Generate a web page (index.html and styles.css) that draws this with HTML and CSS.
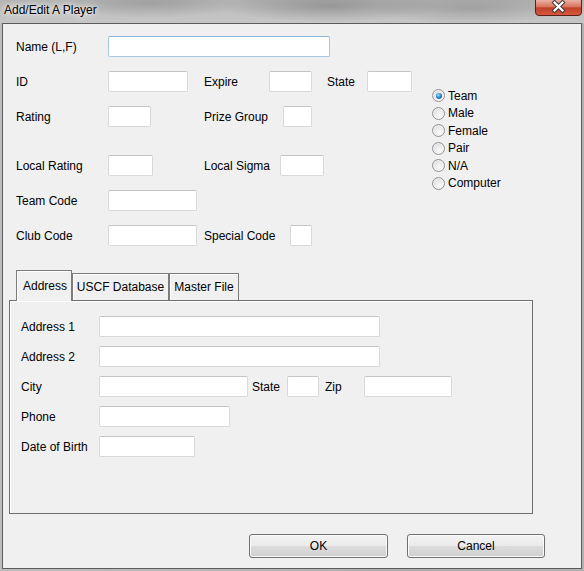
FILE: index.html
```html
<!DOCTYPE html>
<html>
<head>
<meta charset="utf-8">
<link rel="stylesheet" href="styles.css">
</head>
<body>
<div class="window">
  <div class="titlebar">
    <span class="title">Add/Edit A Player</span>
    <div class="close">
      <svg width="47" height="16" viewBox="0 0 47 16">
        <defs>
          <linearGradient id="cg" x1="0" y1="0" x2="0" y2="1">
            <stop offset="0" stop-color="#eab0a2"/>
            <stop offset="0.45" stop-color="#d8735c"/>
            <stop offset="0.5" stop-color="#c2402a"/>
            <stop offset="1" stop-color="#d65c3e"/>
          </linearGradient>
        </defs>
        <path d="M0.5 0 V12 Q0.5 15.5 4 15.5 H43 Q46.5 15.5 46.5 12 V0" fill="url(#cg)" stroke="#5b2119"/>
        <path d="M19.5 2.5 L27.5 10.5 M27.5 2.5 L19.5 10.5" stroke="#3b3b3b" stroke-width="4.2" stroke-linecap="square" fill="none"/>
        <path d="M19.5 2.5 L27.5 10.5 M27.5 2.5 L19.5 10.5" stroke="#ffffff" stroke-width="2.2" stroke-linecap="square" fill="none"/>
      </svg>
    </div>
  </div>
  <div class="client">
    <div class="top">
      <div class="form">
        <div class="row">
          <label class="l1">Name (L,F)</label>
          <input class="box focus w-name" type="text">
        </div>
        <div class="row">
          <label class="l1">ID</label>
          <span class="c2"><input class="box w-id" type="text"></span>
          <label class="l2 w-expire">Expire</label>
          <input class="box w-exp" type="text">
          <label class="l3">State</label>
          <input class="box w-state" type="text">
        </div>
        <div class="row row-lg">
          <label class="l1">Rating</label>
          <span class="c2"><input class="box w-rating" type="text"></span>
          <label class="l2 w-prize">Prize Group</label>
          <input class="box w-prz" type="text">
        </div>
        <div class="row">
          <label class="l1">Local Rating</label>
          <span class="c2"><input class="box w-lr" type="text"></span>
          <label class="l2 w-sigma">Local Sigma</label>
          <input class="box w-ls" type="text">
        </div>
        <div class="row">
          <label class="l1">Team Code</label>
          <input class="box w-code" type="text">
        </div>
        <div class="row row-last">
          <label class="l1">Club Code</label>
          <span class="c2"><input class="box w-code" type="text"></span>
          <label class="l2 w-special">Special Code</label>
          <input class="box w-sc" type="text">
        </div>
      </div>
      <div class="radios">
        <div class="radio"><span class="dot checked"></span>Team</div>
        <div class="radio"><span class="dot"></span>Male</div>
        <div class="radio"><span class="dot"></span>Female</div>
        <div class="radio"><span class="dot"></span>Pair</div>
        <div class="radio"><span class="dot"></span>N/A</div>
        <div class="radio"><span class="dot"></span>Computer</div>
      </div>
    </div>
    <div class="tabs">
      <div class="tab active t-addr">Address</div>
      <div class="tab t-uscf">USCF Database</div>
      <div class="tab t-master">Master File</div>
    </div>
    <div class="panel">
      <div class="prow">
        <label class="pl">Address 1</label>
        <input class="box w-addr" type="text">
      </div>
      <div class="prow">
        <label class="pl">Address 2</label>
        <input class="box w-addr" type="text">
      </div>
      <div class="prow">
        <label class="pl">City</label>
        <input class="box w-city" type="text">
        <label class="pl-state">State</label>
        <input class="box w-pstate" type="text">
        <label class="pl-zip">Zip</label>
        <input class="box w-zip" type="text">
      </div>
      <div class="prow">
        <label class="pl">Phone</label>
        <input class="box w-phone" type="text">
      </div>
      <div class="prow">
        <label class="pl">Date of Birth</label>
        <input class="box w-dob" type="text">
      </div>
    </div>
    <div class="buttons">
      <button class="btn" type="button">OK</button>
      <button class="btn btn-cancel" type="button">Cancel</button>
    </div>
  </div>
</div>
</body>
</html>
```
FILE: styles.css
```css
html, body {
  margin: 0;
  padding: 0;
}
body {
  font-family: "Liberation Sans", Arial, sans-serif;
  font-size: 12px;
  color: #000;
}
.window {
  width: 584px;
  height: 571px;
  display: flex;
  flex-direction: column;
  background: linear-gradient(to right, #bdbdbd 0%, #b7b7b7 40%, #acacac 70%, #b2b2b2 100%);
  overflow: hidden;
}
.titlebar {
  height: 23px;
  flex-shrink: 0;
  display: flex;
  align-items: flex-start;
  background:
    radial-gradient(ellipse 90px 14px at 150px 4px, rgba(120,120,120,0.35), rgba(120,120,120,0) 100%),
    radial-gradient(ellipse 110px 16px at 330px 6px, rgba(110,110,110,0.45), rgba(110,110,110,0) 100%),
    radial-gradient(ellipse 100px 16px at 470px 8px, rgba(120,120,120,0.4), rgba(120,120,120,0) 100%),
    linear-gradient(to bottom, #b3b3b3 0%, #c2c2c2 60%, #c6c6c6 100%);
}
.title {
  padding-left: 4px;
  line-height: 20px;
  text-shadow: 0 0 4px #fff, 0 0 8px rgba(255,255,255,0.9);
}
.close {
  margin-left: auto;
  margin-right: 2px;
  height: 16px;
  line-height: 0;
}
.client {
  flex: 1;
  margin: 0 2px 2px 2px;
  border: 1px solid #5c5c5c;
  background: #f0f0f0;
  display: flex;
  flex-direction: column;
}
.top {
  display: flex;
  align-items: flex-start;
  padding: 12px 0 0 13px;
}
.form {
  width: 416px;
  flex-shrink: 0;
  display: flex;
  flex-direction: column;
}
.row {
  display: flex;
  align-items: center;
  height: 21px;
  margin-bottom: 14px;
}
.row-lg {
  margin-bottom: 28px;
}
.row-last {
  margin-bottom: 0;
}
.l1 {
  width: 92px;
  flex-shrink: 0;
}
.c2 {
  width: 96px;
  flex-shrink: 0;
  display: flex;
}
.l2 {
  flex-shrink: 0;
}
.w-expire { width: 65px; }
.w-prize { width: 79px; }
.w-sigma { width: 76px; }
.w-special { width: 86px; }
.l3 {
  width: 40px;
  margin-left: 15px;
  flex-shrink: 0;
}
.box {
  box-sizing: border-box;
  height: 21px;
  margin: 0;
  padding: 0 3px;
  border: 1px solid #d9d9d9;
  border-top-color: #c4c4c4;
  border-radius: 2px;
  background: #fff;
  font: inherit;
  outline: none;
  flex-shrink: 0;
}
.box.focus {
  border-color: #a9c8e6;
  border-top-color: #8fb5dc;
}
.w-name { width: 222px; }
.w-id { width: 80px; }
.w-exp { width: 43px; }
.w-state { width: 45px; }
.w-rating { width: 43px; }
.w-prz { width: 29px; }
.w-lr { width: 45px; }
.w-ls { width: 44px; }
.w-code { width: 89px; }
.w-sc { width: 22px; }

.radios {
  margin-top: 51px;
  display: flex;
  flex-direction: column;
}
.radio {
  display: flex;
  align-items: center;
  height: 17.5px;
}
.dot {
  position: relative;
  width: 13px;
  height: 13px;
  box-sizing: border-box;
  margin-right: 3px;
  border-radius: 50%;
  border: 1px solid #929292;
  background: radial-gradient(circle at 60% 65%, #fbfbfb 0%, #e6e6e6 55%, #c9c9c9 100%);
  box-shadow: inset 0 0 0 1px rgba(255,255,255,0.6);
}
.dot.checked::after {
  content: "";
  position: absolute;
  left: 2.5px;
  top: 2.5px;
  width: 6px;
  height: 6px;
  border-radius: 50%;
  background: radial-gradient(circle at 40% 35%, #a6e0ff 0%, #2a8ad0 45%, #0d4a7c 100%);
}

.tabs {
  display: flex;
  align-items: flex-end;
  height: 30px;
  margin: 24px 0 0 13px;
  position: relative;
  z-index: 1;
}
.tab {
  box-sizing: border-box;
  height: 27px;
  border: 1px solid #7b7b7b;
  border-bottom: none;
  background: #f0f0f0;
  box-shadow: inset 1px 1px 0 #ffffff;
  display: flex;
  align-items: center;
  justify-content: center;
  flex-shrink: 0;
}
.tab.active {
  height: 31px;
  margin-bottom: -1px;
  padding-bottom: 1px;
  padding-left: 2px;
}
.t-addr { width: 56px; }
.t-uscf { width: 97px; }
.t-master { width: 70px; }

.panel {
  box-sizing: border-box;
  margin-left: 6px;
  width: 524px;
  height: 214px;
  border: 1px solid #6e6e6e;
  box-shadow: inset 1px 1px 0 #ffffff;
  padding: 15px 0 0 11px;
  display: flex;
  flex-direction: column;
}
.prow {
  display: flex;
  align-items: center;
  height: 21px;
  margin-bottom: 9px;
}
.pl {
  width: 78px;
  flex-shrink: 0;
}
.pl-state {
  width: 35px;
  margin-left: 4px;
  flex-shrink: 0;
}
.pl-zip {
  width: 39px;
  margin-left: 6px;
  flex-shrink: 0;
}
.w-addr { width: 281px; }
.w-city { width: 149px; }
.w-pstate { width: 32px; }
.w-zip { width: 88px; }
.w-phone { width: 131px; }
.w-dob { width: 96px; }

.buttons {
  display: flex;
  gap: 19px;
  margin: 20px 0 0 246px;
}
.btn {
  box-sizing: border-box;
  width: 139px;
  height: 24px;
  margin: 0;
  padding: 0;
  border: 1px solid #707070;
  border-radius: 3px;
  background: linear-gradient(to bottom, #f2f2f2 0%, #ebebeb 50%, #dddddd 50%, #cfcfcf 100%);
  box-shadow: inset 0 0 0 1px #fbfbfb;
  font: inherit;
  color: #000;
}
.btn-cancel {
  width: 138px;
}
```
